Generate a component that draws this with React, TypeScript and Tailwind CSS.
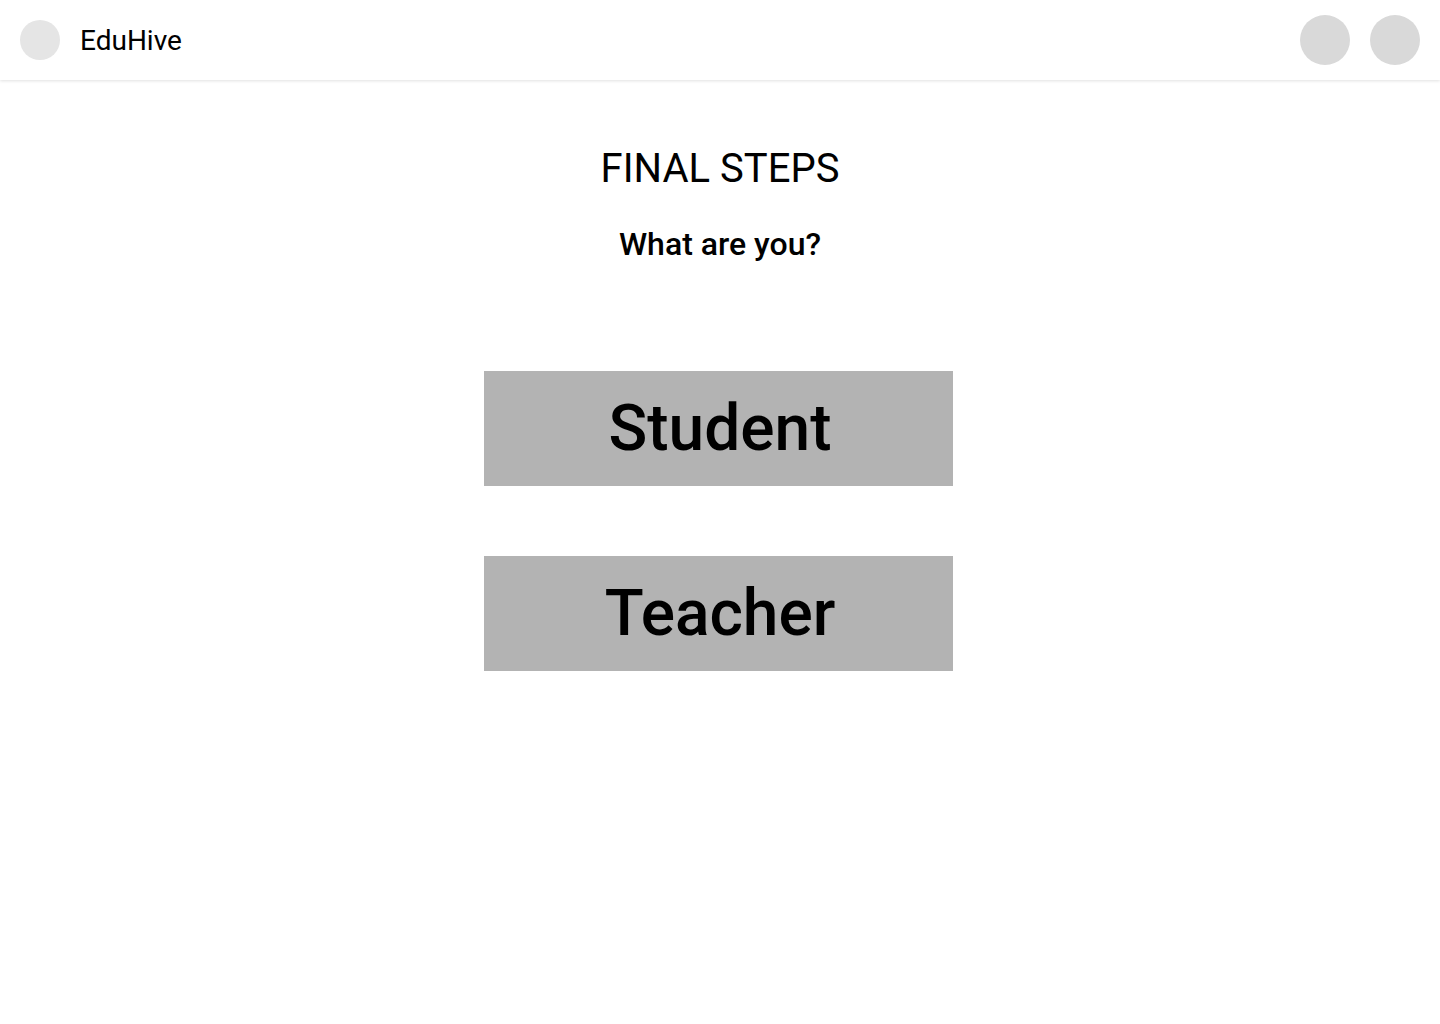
import React from "react";

export default function App() {
  return (
    <div className="min-h-[1024px] bg-white text-black" style={{ fontFamily: "Roboto, 'Liberation Sans', sans-serif" }}>
      <header className="flex h-20 items-center justify-between bg-white pl-5 pr-5 shadow-[0_1px_3px_rgba(0,0,0,0.12)]">
        <div className="flex items-center gap-5">
          <div className="h-10 w-10 rounded-full bg-[#e5e5e5]" />
          <span className="text-[28px] leading-[40px] mt-[1px]">EduHive</span>
        </div>
        <div className="flex items-center gap-5">
          <div className="h-[50px] w-[50px] rounded-full bg-[#d9d9d9]" />
          <div className="h-[50px] w-[50px] rounded-full bg-[#d9d9d9]" />
        </div>
      </header>
      <main className="flex flex-col items-center">
        <h1 className="mt-[63px] text-[40px] leading-[52px]">FINAL STEPS</h1>
        <h2 className="mt-[31px] text-[32px] font-medium leading-[36px]">What are you?</h2>
        <div className="mr-[3px] mt-[109px] flex flex-col gap-[70px]">
          <button className="h-[115px] w-[469px] bg-[#b3b3b3] pl-[3px] text-[64px] font-medium">Student</button>
          <button className="h-[115px] w-[469px] bg-[#b3b3b3] pl-[3px] text-[64px] font-medium">Teacher</button>
        </div>
      </main>
    </div>
  );
}
